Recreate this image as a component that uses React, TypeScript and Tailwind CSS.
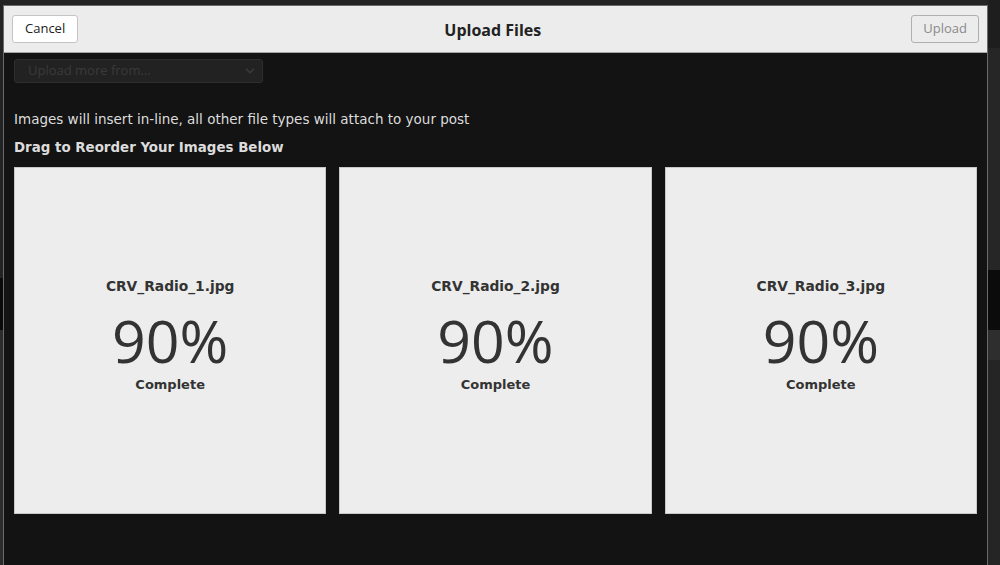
import { ChevronDown } from "lucide-react";

// One upload tile in the reorder grid
interface UploadTileProps {
  name: string;
  percent: number;
}

const UploadTile: React.FC<UploadTileProps> = ({ name, percent }) => (
  <div className="h-[347px] bg-[#ededed] border border-[#c8c8c8] flex flex-col items-center justify-center pb-[10px] text-[#333]">
    <div className="font-[family-name:DejaVu_Sans,Verdana,sans-serif] font-bold text-[13.8px] leading-[18px]">
      {name}
    </div>
    <div className="mt-[20px] font-[family-name:Open_Sans,sans-serif] text-[59px] leading-[50px]">
      {percent}%
    </div>
    <div className="mt-[11px] font-[family-name:DejaVu_Sans,Verdana,sans-serif] font-bold text-[13px] leading-[18px]">
      Complete
    </div>
  </div>
);

const files = ["CRV_Radio_1.jpg", "CRV_Radio_2.jpg", "CRV_Radio_3.jpg"];

export default function App() {
  return (
    <div className="w-[1000px] h-[565px] overflow-hidden bg-[#232323] flex">
      {/* page behind the modal, left edge */}
      <div className="w-[3px] flex flex-col">
        <div className="h-[278px] bg-[#232323]" />
        <div className="h-[52px] bg-[#0a0a0a]" />
        <div className="flex-1 bg-[#2c2c2c]" />
      </div>

      {/* Modal */}
      <div className="w-[985px] mt-[5px] flex flex-col border border-[#6a6a6a] border-b-0 bg-[#131313]">
        <header className="h-[47px] bg-[#ececec] border-b border-[#a5a5a5] flex items-center justify-between px-[8px] font-[family-name:Open_Sans,sans-serif]">
          <button className="h-[28px] px-[12px] bg-white border border-[#c4c4c4] rounded-[3px] text-[13px] text-[#222]">
            Cancel
          </button>
          <h1 className="mt-[2px] text-[16px] font-bold text-[#222] mr-[4px]">Upload Files</h1>
          <button className="h-[28px] px-[11px] bg-[#ececec] border border-[#b0b0b0] rounded-[3px] text-[13px] text-[#8a8a8a]">
            Upload
          </button>
        </header>

        <main className="flex-1 px-[10px] pt-[6px]">
          <div className="w-[249px] h-[24px] bg-[#222] border border-[#2e2e2e] rounded-[3px] flex items-center justify-between pl-[13px] pr-[5px] font-[family-name:Open_Sans,sans-serif] text-[13px] text-[#3a3a3a]">
            <span>Upload more from...</span>
            <ChevronDown className="w-[14px] h-[14px] text-[#3a3a3a]" strokeWidth={3} />
          </div>

          <p className="mt-[27px] font-[family-name:DejaVu_Sans,Verdana,sans-serif] text-[13.5px] leading-[18px] text-[#dcdcdc]">
            Images will insert in-line, all other file types will attach to your post
          </p>
          <h2 className="mt-[11px] font-[family-name:DejaVu_Sans,Verdana,sans-serif] font-bold text-[13.4px] leading-[18px] text-[#dcdcdc]">
            Drag to Reorder Your Images Below
          </h2>

          <div className="mt-[10px] grid grid-cols-3 gap-[13px]">
            {files.map((f) => (
              <UploadTile key={f} name={f} percent={90} />
            ))}
          </div>
        </main>
      </div>

      {/* page behind the modal, right edge */}
      <div className="flex-1 flex flex-col">
        <div className="h-[48px] bg-[#1e1e1e]" />
        <div className="h-[222px] bg-[#262626]" />
        <div className="h-[60px] bg-[#0b0b0b]" />
        <div className="h-[30px] bg-[#2e2e2e]" />
        <div className="flex-1 bg-[#252525]" />
      </div>
    </div>
  );
}
